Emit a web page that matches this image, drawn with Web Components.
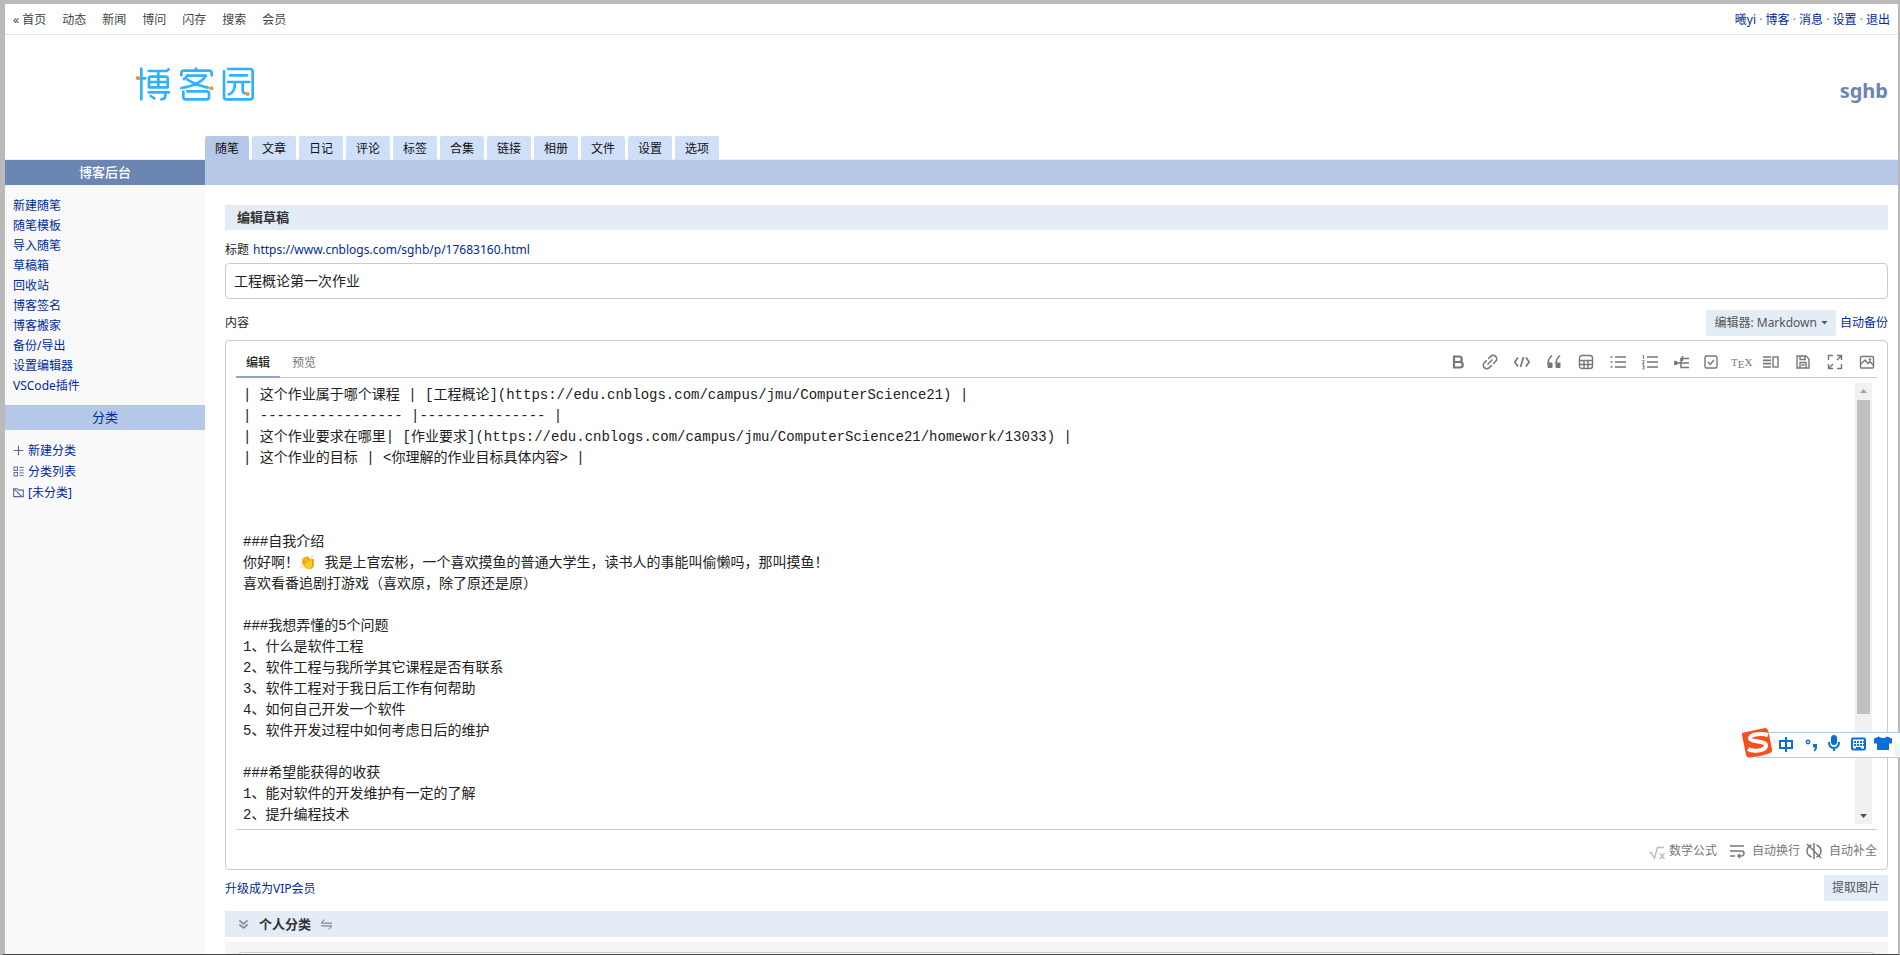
<!DOCTYPE html>
<html lang="zh-CN">
<head>
<meta charset="utf-8">
<meta name="viewport" content="width=device-width, initial-scale=1">
<title>编辑草稿 - 博客后台</title>
<style>
  html, body { margin: 0; height: 100%; }
  body {
    overflow: hidden; background: #fff; color: #222;
    font: 12px/20px "Noto Sans", "Noto Sans CJK SC", sans-serif;
    --link: #002b99; --pale: #e4ecf6; --band: #b5c8e7; --deep: #6b86b3; --line: #ccc;
  }
</style>
</head>
<body>
<blog-admin></blog-admin>
<script>
const ICONS = {
  bold: '<path d="M4 2.500h5a2.700 2.700 0 0 1 0 5.500H4zM4 8h6a2.700 2.700 0 0 1 0 5.500H4z" stroke-width="2.200"/>',
  link: '<g transform="rotate(-45 8 8)"><path d="M7 4.500H3.500a3.500 3.500 0 0 0 0 7H7M9 4.500h3.500a3.500 3.500 0 0 1 0 7H9M4.500 8h7" stroke-width="1.600"/></g>',
  code: '<path d="M4 3.500.8 8 4 12.500M12 3.500l3.200 4.500L12 12.500M9.500 3l-3 10" stroke-width="1.700"/>',
  quote: '<path d="M6 1.500C3 4 1.800 6.500 2.300 10M14 1.500c-3 2.500-4.200 5-3.700 8.500" stroke-width="1.600"/><rect x="1.500" y="8.500" width="5" height="5.500" rx="1" fill="currentColor" stroke="none"/><rect x="9.500" y="8.500" width="5" height="5.500" rx="1" fill="currentColor" stroke="none"/>',
  table: '<rect x="1.500" y="1.500" width="13" height="13" rx="2.500"/><path d="M1.500 6.500h13M1.500 10.500h13M6 6.500v8M10 6.500v8"/>',
  ul: '<path d="M5 3h11M5 8h11M5 13h11M.5 3h2M.5 8h2M.5 13h2" stroke-width="1.700"/>',
  ol: '<path d="M5 3h11M5 8h11M5 13h11" stroke-width="1.600"/><path d="M.5 1.500h1V5M.3 6.500h1.700v1.200L.5 9.500H2.200M.3 11H2v2H.8M2 13v2H.3" stroke-width="1"/>',
  tree: '<path d="M1 9h6M6 4.500h9M8.500 2v5M7 4.500v9h8M7 9h8" stroke-width="1.500"/><circle cx="1.500" cy="9" r="1.500" fill="currentColor"/>',
  check: '<rect x="2" y="2" width="12" height="12" rx="1.500"/><path d="m5 8 2.200 2.500L11 6"/>',
  side: '<path d="M0 3h8M0 6.300h8M0 9.700h8M0 13h8" stroke-width="1.700"/><rect x="10" y="3" width="5" height="10"/>',
  save: '<path d="M2 2h9l3 3v9H2zM5 14V8.500h6V14M5 2v3.500h5V2M6.500 11h3"/>',
  full: '<path d="M1.500 6V1.500H6M10 1.500h4.500V6M14.500 10v4.500H10M6 14.500H1.500V10M10 6l4-4M6 10l-4 4"/>',
  image: '<rect x="1.500" y="2.500" width="13" height="11.500" rx="1"/><path d="m2 10 4-4 3 3.500 2-2 3.500 4"/><circle cx="11" cy="5.500" r=".6"/>',
  wrap: '<path d="M1 3h14M1 8h11.500a2.500 2.500 0 0 1 0 5H9.500M1 13h5M11 11l-2 2 2 2" stroke-width="1.500"/>',
  nocomplete: '<path d="M8 0v16M5.500 2C-.5 4.500-.5 11.500 5.500 14M10.500 2c6 2.500 6 9.500 0 12M1 1l14 14" stroke-width="1.500"/>',
  root: '<path d="M.5 9 2 8.500 5.500 14 8.500 3.500H15M11 9.500l4.500 5.500M15.500 9.500 11 15" stroke-width="1.400"/>',
  plus: '<path d="M8 1v14M1 8h14" stroke-width="1.700"/>',
  list: '<rect x="1.500" y="1.500" width="5" height="5"/><rect x="1.500" y="9.500" width="5" height="5"/><path d="M9.500 2h6M9.500 6h6M9.500 10h6M9.500 14h6"/>',
  folder: '<path d="M1 2.500h5l2 2h7v9.500H1zM1 2.500 13 14" stroke-width="1.600"/>',
  down: '<path d="m2 2 6 5 6-5M2 8l6 5 6-5" stroke-width="2.500"/>',
  swap: '<path d="M0 6h16M0 6l5-5M0 10h16l-5 5" stroke-width="1.500"/>',
};

const define = (name, css, html) => customElements.define(name, class extends HTMLElement {
  connectedCallback() {
    if (this.shadowRoot) return;
    const t = document.createElement('template');
    t.innerHTML = `<style>:host{display:block}*{box-sizing:border-box}a{color:var(--link);text-decoration:none}button{font:inherit;border:0;margin:0;padding:0;background:none;color:inherit}${css}</style>`
      + (typeof html === 'function' ? html(this) : html);
    this.attachShadow({ mode: 'open' }).append(t.content.cloneNode(true));
  }
});

define('ui-icon', ':host{display:inline-flex;width:16px;height:16px;flex:none}svg{width:100%;height:100%}',
  el => `<svg viewBox="0 0 16 16" fill="none" stroke="currentColor" stroke-width="1.400" aria-hidden="true">${ICONS[el.getAttribute('name')]}</svg>`);

define('site-nav', `
  :host{display:flex;justify-content:space-between;height:31px;padding:6px 8px 0 8px;border-bottom:1px dotted #ccc}
  .main{display:flex;gap:16px}
  .main a{color:#444}
  .user{color:#777}`, `
  <nav class="main"><a href="#">« 首页</a>${['动态','新闻','博问','闪存','搜索','会员'].map(t => `<a href="#">${t}</a>`).join('')}</nav>
  <nav class="user">${['曦yi','博客','消息','设置','退出'].map(t => `<a href="#">${t}</a>`).join(' · ')}</nav>`);

define('site-logo', 'a{display:block}svg{display:block;width:120px;height:38px}', `
  <a href="#" aria-label="博客园"><svg viewBox="405 195 360 114" fill="none" stroke="#2fb1ff" stroke-width="8" stroke-linecap="round" stroke-linejoin="round">
    <path d="M424 206V298M416 235H436M446 213H500L506 208M447 262V236Q447 230 453 230H497Q503 230 503 236V262ZM447 246H503M475 213V262M446 277H507M496 277V288Q496 298 484 298M452 288L463 295"/>
    <path d="M544 226V220Q544 212 552 212H627Q635 212 635 220V226M588 206V212M562 226Q560 232 552 237M562 227H618Q600 256 544 264M562 239Q590 256 624 263M550 275V291Q550 298 557 298H620Q627 298 627 291V281Q627 274 620 274H562"/>
    <path d="M672 214V291Q672 298 680 298H750Q758 298 758 291V215Q758 207 750 207H684M690 226H741M684 246H748M705 246Q705 278 687 283M728 246V271Q728 279 735 280"/>
    <g fill="#ff8c26" stroke="none"><circle cx="413" cy="234" r="6"/><circle cx="634" cy="265" r="6"/><circle cx="743" cy="282" r="6"/></g>
  </svg></a>`);

define('site-header', `
  :host{display:grid;grid-template-columns:200px 1fr;height:125px;border-bottom:1px solid #eee}
  .top{grid-column:1/-1;display:flex;justify-content:space-between;padding:30px 10px 0 130px;height:101px}
  h1{margin:12px 0 0;font-size:20px;line-height:28px;color:var(--deep)}
  nav{grid-column:2;display:flex;gap:3px}
  nav a{width:44px;height:24px;line-height:26px;text-align:center;background:#cfdff8;color:#111;border-radius:2px 2px 0 0}
  nav a.on{background:var(--band)}`, `
  <div class="top"><site-logo></site-logo><h1>sghb</h1></div>
  <nav>${['随笔','文章','日记','评论','标签','合集','链接','相册','文件','设置','选项'].map((t, i) => `<a href="#"${i ? '' : ' class="on"'}>${t}</a>`).join('')}</nav>`);

define('side-bar', `
  :host{background:#f9f9f9}
  h2{margin:0;height:25px;font:500 13px/25px "Noto Sans","Noto Sans CJK SC",sans-serif;text-align:center;background:var(--deep);color:#fff}
  h2.sub{background:var(--band);color:var(--link);font-weight:400}
  ul{list-style:none;margin:0;padding:11px 8px 9px}
  .cats{padding-top:10px}
  .cats li{height:21px;line-height:21px;display:flex;align-items:center;gap:4px}
  ui-icon{width:11px;height:11px;color:#5c6795}`, `
  <h2>博客后台</h2>
  <ul>${['新建随笔','随笔模板','导入随笔','草稿箱','回收站','博客签名','博客搬家','备份/导出','设置编辑器','VSCode插件'].map(t => `<li><a href="#">${t}</a></li>`).join('')}</ul>
  <h2 class="sub">分类</h2>
  <ul class="cats">${[['plus','新建分类'],['list','分类列表'],['folder','[未分类]']].map(([i, t]) => `<li><ui-icon name="${i}"></ui-icon><a href="#">${t}</a></li>`).join('')}</ul>`);

const NOTE = `| 这个作业属于哪个课程 | [工程概论](https://edu.cnblogs.com/campus/jmu/ComputerScience21) |
| ----------------- |--------------- |
| 这个作业要求在哪里| [作业要求](https://edu.cnblogs.com/campus/jmu/ComputerScience21/homework/13033) |
| 这个作业的目标 | &lt;你理解的作业目标具体内容&gt; |



###自我介绍
你好啊！👏 我是上官宏彬，一个喜欢摸鱼的普通大学生，读书人的事能叫偷懒吗，那叫摸鱼！
喜欢看番追剧打游戏（喜欢原，除了原还是原）

###我想弄懂的5个问题
1、什么是软件工程
2、软件工程与我所学其它课程是否有联系
3、软件工程对于我日后工作有何帮助
4、如何自己开发一个软件
5、软件开发过程中如何考虑日后的维护

###希望能获得的收获
1、能对软件的开发维护有一定的了解
2、提升编程技术`;

define('markdown-editor', `
  :host{border:1px solid var(--line);border-radius:4px;padding:0 10px}
  .bar{display:flex;justify-content:space-between;height:37px;border-bottom:1px solid var(--line);padding-top:8px}
  .tabs{display:flex;gap:2px}
  .tabs button{width:44px;height:29px;color:#777;line-height:26px;border-bottom:2px solid transparent}
  .tabs .on{color:#222;font-weight:500;border-color:#8ea2cc}
  .tools{display:flex;gap:16px;padding:5px 2px 0 0;color:#777}
  .tools button{height:16px;width:16px;line-height:16px}
  .tools .check{margin-left:-3px}
  .tools .tex{font:11px/14px "Liberation Serif",serif;width:20px;margin:0 -4px;white-space:nowrap}
  .tex span{position:relative;top:2px}
  .body{display:flex;height:452px;border-bottom:1px solid var(--line);padding:5px 5px 4px 7px}
  textarea{flex:1;min-width:0;height:442px;border:0;outline:0;margin:0;padding:2px 0 0;resize:none;overflow:hidden;white-space:pre-wrap;background:none;color:#222;
    font:14px/21px "Liberation Mono","Noto Sans CJK SC",monospace}
  .scroll{width:17px;height:441px;background:#f1f1f1;display:flex;flex-direction:column;align-items:center;padding:6px 2px}
  .scroll i{width:7px;height:4px;background:#a3a3a3;clip-path:polygon(50% 0,100% 100%,0 100%)}
  .scroll i:last-child{background:#505050;clip-path:polygon(0 0,100% 0,50% 100%);margin-top:auto}
  .scroll b{width:13px;flex:0 0 314px;background:#c1c1c1;margin-top:7px}
  .foot{display:flex;justify-content:flex-end;align-items:center;height:39px;padding-top:3px;color:#777;gap:6px}
  .foot button{display:flex;align-items:center;gap:7px}
  .foot button:first-child{gap:4px;margin-right:6px}
  .foot button:first-child ui-icon{color:#bbb;margin-top:2px}`, `
  <div class="bar">
    <div class="tabs"><button class="on">编辑</button><button>预览</button></div>
    <div class="tools">${['bold','link','code','quote','table','ul','ol','tree','check','tex','side','save','full','image'].map(n =>
      n === 'tex' ? '<button class="tex">T<span>E</span>X</button>' : `<button class="${n}" aria-label="${n}"><ui-icon name="${n}"></ui-icon></button>`).join('')}</div>
  </div>
  <div class="body"><textarea id="body" aria-label="内容" spellcheck="false">${NOTE}</textarea><div class="scroll" aria-hidden="true"><i></i><b></b><i></i></div></div>
  <div class="foot"><button><ui-icon name="root"></ui-icon>数学公式</button><button><ui-icon name="wrap"></ui-icon>自动换行</button><button><ui-icon name="nocomplete"></ui-icon>自动补全</button></div>`);

define('post-form', `
  :host{padding:20px 10px 0 20px}
  h3{margin:0;height:25px;line-height:25px;font-size:13px;color:#333;background:var(--pale);padding-left:12px}
  .row{display:flex;justify-content:space-between;align-items:center;gap:4px}
  .title{justify-content:flex-start;height:33px;padding-top:6px}
  input{display:block;width:100%;height:36px;border:1px solid var(--line);border-radius:4px;padding:0 8px 2px;font:14px "Noto Sans","Noto Sans CJK SC",sans-serif;color:#222}
  .content{height:41px;padding-top:6px}
  .soft{background:var(--pale);color:#555;height:26px;padding:0 8px;display:flex;align-items:center;gap:4px}
  .soft i{width:7px;height:4px;background:#555;clip-path:polygon(0 0,100% 0,50% 100%)}
  .push{margin-left:auto}
  .after{height:41px;align-items:flex-start;padding-top:5px}
  .after>a{line-height:28px}
  .fold{display:flex;align-items:center;height:26px}
  .fold ui-icon{width:11px;height:11px;color:#889;margin:0 10px 0 1px}
  .fold ui-icon:last-child{margin:0 0 0 10px}
  .panel{background:#f5f5f5;margin-top:5px;padding:10px 13px}
  .panel div{height:60px;border:1px solid #ccc;border-radius:4px;background:#fff}`, `
  <h3>编辑草稿</h3>
  <div class="row title"><label for="title">标题</label><a href="#">https://www.cnblogs.com/sghb/p/17683160.html</a></div>
  <input id="title" value="工程概论第一次作业">
  <div class="row content"><span>内容</span><button class="soft push">编辑器: Markdown<i></i></button><a href="#">自动备份</a></div>
  <markdown-editor></markdown-editor>
  <div class="row after"><a href="#">升级成为VIP会员</a><button class="soft">提取图片</button></div>
  <h3 class="fold"><ui-icon name="down"></ui-icon>个人分类<ui-icon name="swap"></ui-icon></h3>
  <div class="panel"><div></div></div>`);

define('ime-bar', `
  :host{position:absolute;right:0;bottom:196px;width:158px;height:28px;color:#0a6fd6}
  .strip{position:absolute;left:14px;right:0;top:1px;height:26px;border:solid #b7c9e6;border-width:1px 0;background:#fff}
  .glow{position:absolute;right:0;top:13px;width:5px;height:12px;background:#edf7e6}
  svg{position:absolute;left:0;top:-3px}`, `
  <div class="strip"></div><div class="glow"></div>
  <svg width="158" height="31" viewBox="0 -6 158 31" fill="none" stroke="currentColor" stroke-width="2">
    <path d="M0 1Q-1-1 2-1.500L23-6Q25-6 26-4L30 15Q31 18 27 19.500Q18 23 8 23.500Q5 24 4 21Z" fill="#f4511e" stroke="none"/>
    <path d="M26 1C20-1 8 0 8 4.500C9 9 25 6 24 12C23 17 11 18 6 15" stroke="#fff" stroke-width="4"/>
    <path d="M38 7h12v7H38zM44 3v15"/>
    <circle cx="66" cy="8" r="1.700" stroke-width="1.500"/><path d="M71 10h4v3q0 3-3 4.500v-2q1.300-.7 1-2h-2z" fill="currentColor" stroke="none"/>
    <rect x="89" y="1" width="6" height="10" rx="3" fill="currentColor" stroke="none"/><path d="M87 8q0 6 5 6t5-6M92 14v3"/>
    <rect x="110" y="4.500" width="13" height="11" rx="1" /><path d="M112 8h10M112 11h10" stroke-dasharray="2 1"/><path d="M114 14h5"/>
    <path d="M137 2.500l-5 2v5h3V16h12V9.500h3v-5l-5-2q-4 3-8 0z" fill="currentColor" stroke="none" />
  </svg>`);

define('blog-admin', `
  :host{height:100vh;overflow:hidden;position:relative}
  .frame{height:100%;box-sizing:border-box;border:solid #bababa;border-width:4px 2px 1px 5px;border-bottom-color:#444;overflow:hidden;display:flex;flex-direction:column}
  .cols{flex:1;min-height:0;display:grid;grid-template-columns:200px 1fr}
  .cols main{min-width:0}
  .band{height:25px;background:var(--band)}
  site-nav,site-header{flex:none}`, `
  <div class="frame">
    <site-nav></site-nav>
    <site-header></site-header>
    <div class="cols"><side-bar></side-bar><main><div class="band"></div><post-form></post-form></main></div>
  </div>
  <ime-bar></ime-bar>`);
</script>
</body>
</html>
